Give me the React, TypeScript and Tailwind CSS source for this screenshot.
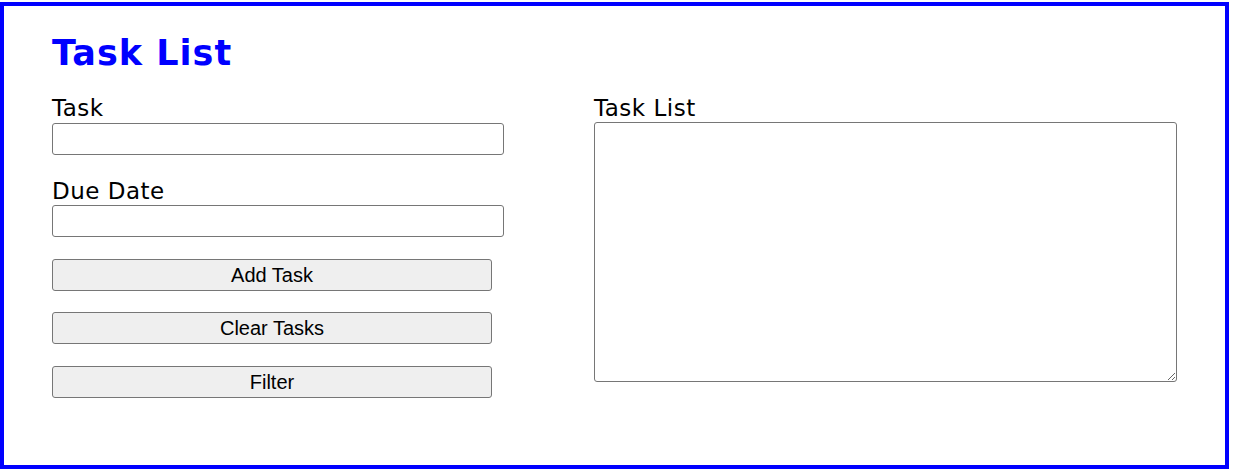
import React from "react";

const labelCls =
  "block text-[23px] leading-[28px] tracking-[0.5px] text-black [font-family:'DejaVu_Sans',Verdana,sans-serif]";
const inputCls =
  "block w-full h-[32px] rounded-[3px] border border-[#767676] bg-white px-1 outline-none";
const buttonCls =
  "block w-[440px] h-[32px] rounded-[3px] border border-[#767676] bg-[#efefef] text-[20px] text-black [font-family:'Liberation_Sans',Arial,sans-serif]";

export default function App() {
  return (
    <div className="mt-[2px] w-[1229px] h-[467px] border-4 border-[#0000ff] bg-white">
      <div className="pl-[48px] pt-[27px]">
        <h1 className="text-[35px] leading-[40px] tracking-[1px] font-bold text-[#0000ff] [font-family:'DejaVu_Sans',Verdana,sans-serif]">
          Task List
        </h1>

        <div className="mt-[21px] flex gap-[90px]">
          {/* left: form */}
          <div className="w-[452px]">
            <label className={labelCls}>Task</label>
            <input type="text" className={inputCls + " mt-px"} />

            <label className={labelCls + " mt-[22px]"}>Due Date</label>
            <input type="text" className={inputCls} />

            <div className="mt-[22px] flex flex-col gap-[21px]">
              <button className={buttonCls}>Add Task</button>
              <button className={buttonCls}>Clear Tasks</button>
              <button className={buttonCls + " mt-px"}>Filter</button>
            </div>
          </div>

          {/* right: list */}
          <div className="w-[583px]">
            <label className={labelCls}>Task List</label>
            <textarea className="block w-[583px] h-[260px] rounded-[3px] border border-[#767676] bg-white outline-none" />
          </div>
        </div>
      </div>
    </div>
  );
}
